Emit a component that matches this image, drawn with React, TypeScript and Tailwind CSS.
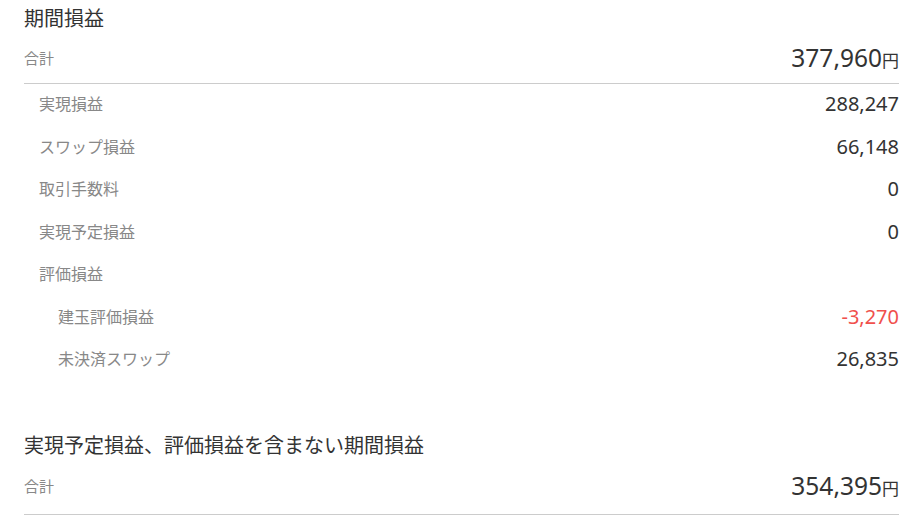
const rows: { label: string; value: string; level: 1 | 2; red?: boolean }[] = [
  { label: "実現損益", value: "288,247", level: 1 },
  { label: "スワップ損益", value: "66,148", level: 1 },
  { label: "取引手数料", value: "0", level: 1 },
  { label: "実現予定損益", value: "0", level: 1 },
  { label: "評価損益", value: "", level: 1 },
  { label: "建玉評価損益", value: "-3,270", level: 2, red: true },
  { label: "未決済スワップ", value: "26,835", level: 2 },
];

function Total({ amount, className }: { amount: string; className: string }) {
  return (
    <div className={`flex items-center justify-between border-b border-[#cccccc] ${className}`}>
      <span className="text-[15px] text-[#888888]">合計</span>
      <span className="flex items-baseline text-[#333333]">
        <span className="text-[24.5px] leading-none">{amount}</span>
        <span className="text-[17px] leading-none">円</span>
      </span>
    </div>
  );
}

export default function App() {
  return (
    <div
      className="min-h-screen bg-white pl-6 pr-[18px] pt-[5px]"
      style={{ fontFamily: '"Noto Sans", "Noto Sans CJK JP", sans-serif' }}
    >
      <h2 className="text-[20px] leading-[28px] text-[#333333]">期間損益</h2>
      <Total amount="377,960" className="h-[51px]" />
      <ul className="-mt-[1px]">
        {rows.map((r) => (
          <li
            key={r.label}
            className={`flex h-[42.5px] items-center justify-between ${r.level === 2 ? "pl-[34px]" : "pl-[15px]"}`}
          >
            <span className="text-[16px] text-[#888888]">{r.label}</span>
            <span className={`text-[20px] ${r.red ? "text-[#f0504c]" : "text-[#333333]"}`}>{r.value}</span>
          </li>
        ))}
      </ul>

      <h2 className="mt-[51px] text-[20px] leading-[28px] text-[#333333]">実現予定損益、評価損益を含まない期間損益</h2>
      <Total amount="354,395" className="h-[55px]" />
    </div>
  );
}
